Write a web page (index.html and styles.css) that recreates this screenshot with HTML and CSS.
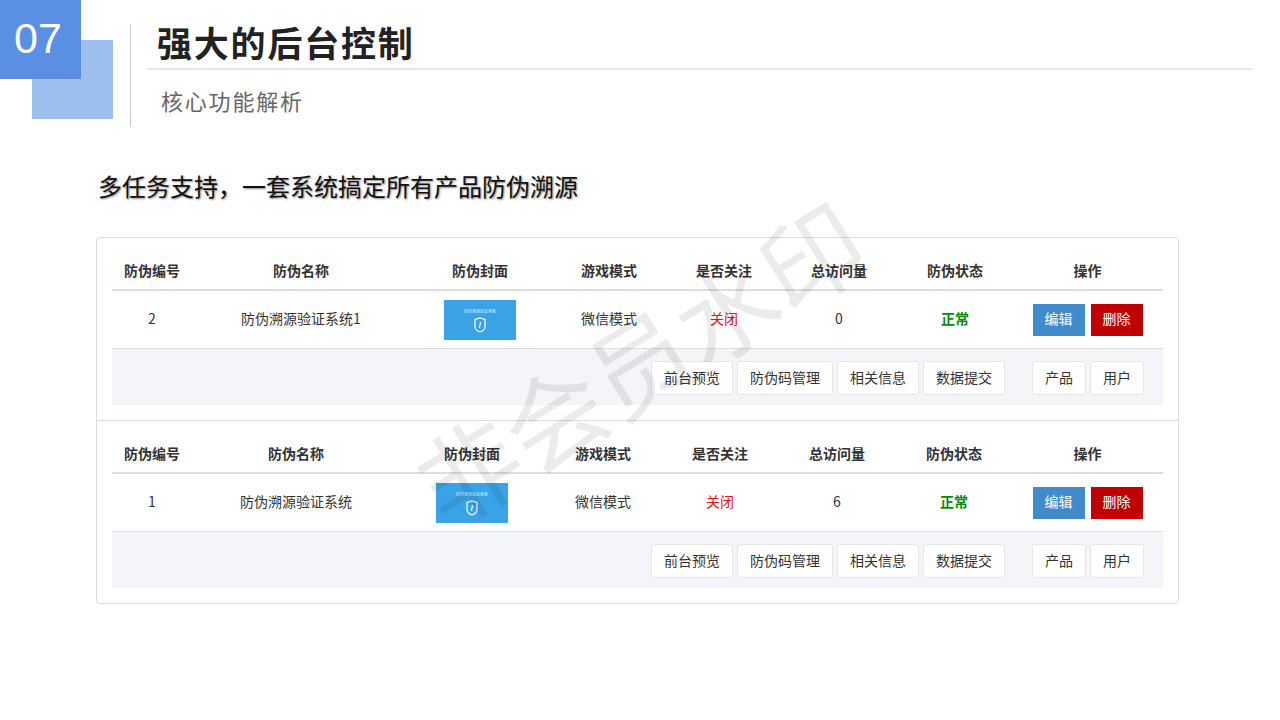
FILE: index.html
```html
<!DOCTYPE html>
<html lang="zh-CN">
<head>
  <meta charset="UTF-8" />
  <meta name="viewport" content="width=device-width, initial-scale=1.0"/>
  <title>强大的后台控制</title>
  <link rel="stylesheet" href="styles.css">
</head>
<body>
  <header class="head">
    <div class="badge">
      <div class="badge-back"></div>
      <div class="badge-front">07</div>
    </div>
    <div class="head-main">
      <h1 class="title">强大的后台控制</h1>
      <p class="subtitle">核心功能解析</p>
    </div>
  </header>

  <h2 class="lead">多任务支持，一套系统搞定所有产品防伪溯源</h2>

  <section class="card">
    <div class="item">
      <table class="grid grid-a">
        <colgroup>
          <col class="c1"><col class="c2"><col class="c3"><col class="c4"><col class="c5"><col class="c6"><col class="c7"><col class="c8">
        </colgroup>
        <thead>
          <tr><th>防伪编号</th><th>防伪名称</th><th>防伪封面</th><th>游戏模式</th><th>是否关注</th><th>总访问量</th><th>防伪状态</th><th>操作</th></tr>
        </thead>
        <tbody>
          <tr>
            <td>2</td>
            <td>防伪溯源验证系统1</td>
            <td>
              <div class="cover">
                <span class="cover-text">防伪溯源验证系统</span>
                <svg class="cover-icon" viewBox="0 0 12 16" width="12" height="16"><path d="M6 1 L11 2.5 V10 Q11 13 6 15 Q1 13 1 10 V2.5 Z" fill="none" stroke="#fff" stroke-width="1.2"/><path d="M6.6 5 L5.4 11" stroke="#fff" stroke-width="1.2"/></svg>
              </div>
            </td>
            <td>微信模式</td>
            <td class="off">关闭</td>
            <td>0</td>
            <td class="ok">正常</td>
            <td>
              <div class="ops">
                <button class="btn btn-blue">编辑</button>
                <button class="btn btn-red">删除</button>
              </div>
            </td>
          </tr>
        </tbody>
      </table>
      <div class="tools">
        <div class="tool-group">
          <button class="tool">前台预览</button>
          <button class="tool">防伪码管理</button>
          <button class="tool">相关信息</button>
          <button class="tool">数据提交</button>
        </div>
        <div class="tool-group">
          <button class="tool">产品</button>
          <button class="tool">用户</button>
        </div>
      </div>
    </div>

    <div class="item">
      <table class="grid grid-b">
        <colgroup>
          <col class="c1"><col class="c2"><col class="c3"><col class="c4"><col class="c5"><col class="c6"><col class="c7"><col class="c8">
        </colgroup>
        <thead>
          <tr><th>防伪编号</th><th>防伪名称</th><th>防伪封面</th><th>游戏模式</th><th>是否关注</th><th>总访问量</th><th>防伪状态</th><th>操作</th></tr>
        </thead>
        <tbody>
          <tr>
            <td>1</td>
            <td>防伪溯源验证系统</td>
            <td>
              <div class="cover">
                <span class="cover-text">防伪溯源验证系统</span>
                <svg class="cover-icon" viewBox="0 0 12 16" width="12" height="16"><path d="M6 1 L11 2.5 V10 Q11 13 6 15 Q1 13 1 10 V2.5 Z" fill="none" stroke="#fff" stroke-width="1.2"/><path d="M6.6 5 L5.4 11" stroke="#fff" stroke-width="1.2"/></svg>
              </div>
            </td>
            <td>微信模式</td>
            <td class="off">关闭</td>
            <td>6</td>
            <td class="ok">正常</td>
            <td>
              <div class="ops">
                <button class="btn btn-blue">编辑</button>
                <button class="btn btn-red">删除</button>
              </div>
            </td>
          </tr>
        </tbody>
      </table>
      <div class="tools">
        <div class="tool-group">
          <button class="tool">前台预览</button>
          <button class="tool">防伪码管理</button>
          <button class="tool">相关信息</button>
          <button class="tool">数据提交</button>
        </div>
        <div class="tool-group">
          <button class="tool">产品</button>
          <button class="tool">用户</button>
        </div>
      </div>
    </div>
  </section>

  <div class="watermark">非会员水印</div>
</body>
</html>
```

FILE: styles.css
```css
html, body {
  height: 100%;
}

body {
  margin: 0;
  position: relative;
  overflow: hidden;
  background: #fff;
  color: #333;
  font-family: "Noto Sans CJK SC", "Liberation Sans", sans-serif;
}

/* header */
.head {
  display: flex;
  height: 127px;
}

.badge {
  position: relative;
  width: 113px;
  height: 119px;
  flex: none;
}

.badge-back {
  position: absolute;
  left: 32px;
  top: 40px;
  width: 81px;
  height: 79px;
  background: #9dbfee;
}

.badge-front {
  position: absolute;
  left: 0;
  top: 0;
  width: 81px;
  height: 79px;
  padding-left: 14px;
  box-sizing: border-box;
  background: #5b8fe3;
  color: #fff;
  font-family: "Liberation Sans", sans-serif;
  font-size: 43px;
  line-height: 76px;
}

.head-main {
  margin: 24px 0 0 17px;
  padding-left: 16px;
  border-left: 1px solid #ccc;
  width: 1105px;
}

.title {
  margin: 0;
  height: 44px;
  padding-left: 10px;
  border-bottom: 2px solid #e8e8e8;
  color: #222;
  font-size: 35px;
  font-weight: bold;
  line-height: 36px;
  letter-spacing: 1.8px;
}

.subtitle {
  margin: 14px 0 0;
  padding-left: 14px;
  color: #666;
  font-size: 22px;
  line-height: 32px;
  letter-spacing: 1.8px;
}

.lead {
  margin: 42px 0 0 98px;
  color: #111;
  font-size: 24px;
  font-weight: normal;
  line-height: 34px;
  text-shadow: 1px 1px 2px #888;
}

/* card */
.card {
  width: 1083px;
  margin: 34px 0 0 96px;
  box-sizing: border-box;
  border: 1px solid #ddd;
  border-radius: 4px;
}

.item {
  padding: 15px;
}

.item + .item {
  border-top: 1px solid #ddd;
}

.grid {
  width: 1051px;
  border-collapse: collapse;
  table-layout: fixed;
  font-size: 14px;
}

.grid th {
  height: 34px;
  padding: 0 0 2px;
  border-bottom: 2px solid #ddd;
  font-weight: bold;
  text-align: center;
}

.grid td {
  height: 53px;
  padding: 0 0 4px;
  border-bottom: 1px solid #ddd;
  text-align: center;
}

.grid .c1 { width: 80px; }
.grid .c8 { width: 151px; }

.grid-a .c2 { width: 218px; }
.grid-a .c3 { width: 140px; }
.grid-a .c4 { width: 118px; }
.grid-a .c5 { width: 112px; }
.grid-a .c6 { width: 118px; }
.grid-a .c7 { width: 114px; }

.grid-b .c2 { width: 208px; }
.grid-b .c3 { width: 144px; }
.grid-b .c4 { width: 118px; }
.grid-b .c5 { width: 116px; }
.grid-b .c6 { width: 118px; }
.grid-b .c7 { width: 116px; }

.off {
  color: #e01515;
}

.ok {
  color: #0a8a0a;
  font-weight: bold;
}

.cover {
  display: flex;
  flex-direction: column;
  align-items: center;
  width: 72px;
  height: 40px;
  margin: 4px auto 0;
  background: #3aa3e8;
}

.cover-text {
  margin-top: 9px;
  color: #d5ecfb;
  font-size: 4px;
  line-height: 5px;
}

.cover-icon {
  margin-top: 3px;
}

.ops {
  display: flex;
  justify-content: center;
  gap: 6px;
  margin-top: 4px;
}

.btn {
  width: 52px;
  height: 32px;
  padding: 0 0 3px;
  border: none;
  color: #fff;
  font-family: inherit;
  font-size: 14px;
}

.btn-blue {
  background: #428bca;
}

.btn-red {
  background: #c00000;
}

/* gray tool row */
.tools {
  display: flex;
  justify-content: flex-end;
  align-items: center;
  gap: 27px;
  height: 56px;
  padding: 1px 19px 0 0;
  box-sizing: border-box;
  background: #f4f5f8;
}

.tool-group {
  display: flex;
  gap: 4px;
}

.tool {
  height: 34px;
  padding: 0 12px 2px;
  border: 1px solid #e7e7e7;
  border-radius: 3px;
  background: #fff;
  color: #333;
  font-family: inherit;
  font-size: 14px;
}

/* sits over everything */
.watermark {
  position: absolute;
  left: 638px;
  top: 360px;
  color: rgba(0, 0, 0, 0.08);
  font-size: 101px;
  line-height: 1;
  white-space: nowrap;
  pointer-events: none;
  transform: translate(-50%, -50%) rotate(-32deg);
}
```
